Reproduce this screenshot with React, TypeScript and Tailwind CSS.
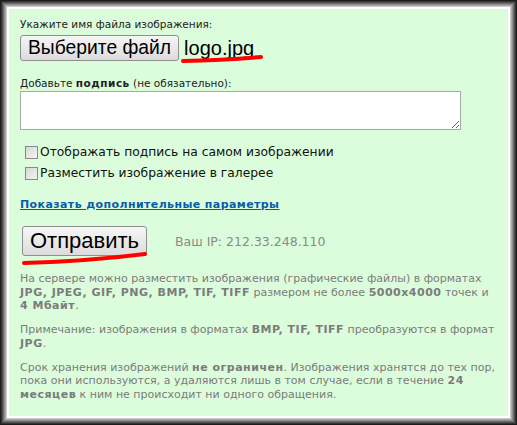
const frame =
  "shadow-[inset_0_0_0_1px_#1c1c1c,inset_0_0_0_2px_#333,inset_0_0_0_3px_#4f4f4f,inset_0_0_0_4px_#6d6d6d,inset_0_0_0_5px_#8c8c8c,inset_0_0_0_6px_#aaa,inset_0_0_0_7px_#c8c8c8,inset_0_0_0_8px_#fff,inset_0_0_0_9px_#fff]";

const arial = { fontFamily: '"Liberation Sans", Arial, sans-serif' };

function Checkbox() {
  return (
    <span className="inline-block w-[13px] h-[13px] border border-[#8a8a8a] bg-gradient-to-br from-[#d8d8d8] to-[#f4f4f4] shrink-0" />
  );
}

export default function App() {
  return (
    <div className={`relative w-[517px] h-[425px] bg-[#dcfddb] p-[9px] ${frame}`}>
      <div
        className="pl-[11px] pt-[9px] text-[11px] leading-[13px] text-[#222]"
        style={{ fontFamily: '"DejaVu Sans", Verdana, sans-serif' }}
      >
        <div className="text-[10.5px]">Укажите имя файла изображения:</div>

        {/* file picker */}
        <div className="flex items-center mt-[4px] h-[26px]">
          <button
            className="h-[26px] px-[7px] border border-[#8e8e8e] rounded-[3px] bg-gradient-to-b from-[#f6f6f6] to-[#dcdcdc] text-[19.3px] leading-[24px] text-black"
            style={arial}
          >
            Выберите файл
          </button>
          <span className="ml-[5px] text-[20px] leading-[24px] text-black" style={arial}>
            logo.jpg
          </span>
        </div>

        <div className="mt-[16px] text-[10.5px]">
          Добавьте <b className="tracking-[0.5px]">подпись</b> (не обязательно):
        </div>
        <textarea className="block mt-[1px] w-[441px] h-[39px] border border-[#a9a9a9] bg-white resize" />

        {/* options */}
        <div className="mt-[15px] flex flex-col gap-[6px] pl-[5px] text-[12.3px] leading-[15px] text-[#111]">
          <label className="flex items-center gap-[2px]">
            <Checkbox />
            <span>Отображать подпись на самом изображении</span>
          </label>
          <label className="flex items-center gap-[2px]">
            <Checkbox />
            <span>Разместить изображение в галерее</span>
          </label>
        </div>

        <a className="block mt-[17px] font-bold underline tracking-[0.4px] text-[#0b5ca8]" href="#">
          Показать дополнительные параметры
        </a>

        {/* submit */}
        <div className="flex items-center mt-[15px]">
          <button
            className="ml-[2px] h-[30px] w-[125px] border border-[#8e8e8e] rounded-[3px] bg-gradient-to-b from-[#f6f6f6] to-[#dcdcdc] text-[22px] leading-[26px] text-black"
            style={arial}
          >
            Отправить
          </button>
          <span className="ml-[28px] text-[12.5px] text-[#8a8a8a]">Ваш IP: 212.33.248.110</span>
        </div>

        {/* notes */}
        <div className="mt-[16px] w-[479px] flex flex-col gap-[10.5px] text-[#7b7b7b] leading-[13.5px] [&_b]:tracking-[0.5px]">
          <p>
            На сервере можно разместить изображения (графические файлы) в форматах{" "}
            <b>JPG, JPEG, GIF, PNG, BMP, TIF, TIFF</b> размером не более <b>5000x4000</b> точек и{" "}
            <b>4 Мбайт</b>.
          </p>
          <p>
            Примечание: изображения в форматах <b>BMP, TIF, TIFF</b> преобразуются в формат <b>JPG</b>.
          </p>
          <p>
            Срок хранения изображений <b>не ограничен</b>. Изображения хранятся до тех пор, пока они
            используются, а удаляются лишь в том случае, если в течение <b>24 месяцев</b> к ним не
            происходит ни одного обращения.
          </p>
        </div>
      </div>

      {/* red annotation strokes */}
      <svg className="absolute left-0 top-0 pointer-events-none" width="517" height="425">
        <path d="M183 61 Q225 60 261 57" stroke="#f00" strokeWidth="4" fill="none" strokeLinecap="round" />
        <path d="M24 263 Q90 261 145 254" stroke="#f00" strokeWidth="4" fill="none" strokeLinecap="round" />
      </svg>
    </div>
  );
}
